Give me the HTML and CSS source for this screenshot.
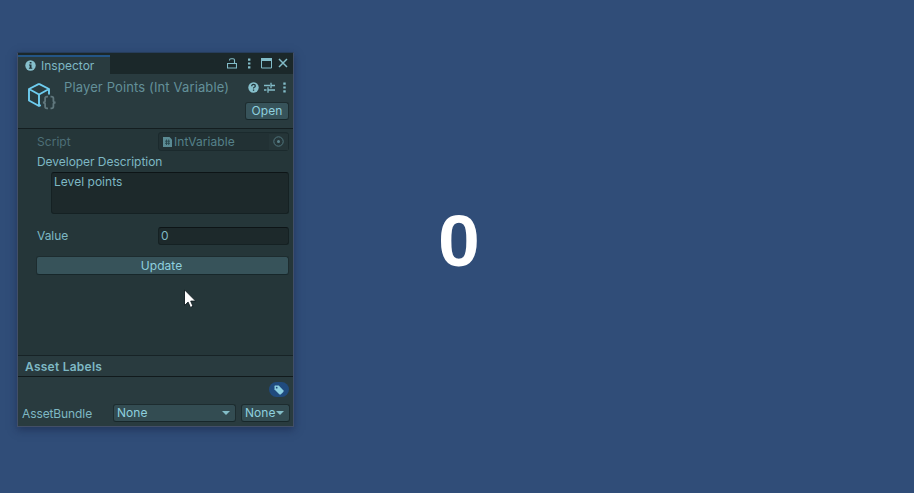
FILE: index.html
```html
<!DOCTYPE html>
<html lang="en">
<head>
<meta charset="utf-8">
<title>Inspector</title>
<link rel="stylesheet" href="styles.css">
</head>
<body>
<main class="game">
  <section class="inspector">
    <div class="tabbar">
      <div class="tab">
        <svg class="info" width="11" height="11" viewBox="0 0 11 11"><circle cx="5.5" cy="5.5" r="5.2" fill="#86c0cc"/><path d="M4.7 2h1.8v1.5H4.7zM4 4.5h2.5v3.2h.8v1H3.900v-1h.8V5.500H4z" fill="#20343a"/></svg>
        <span>Inspector</span>
      </div>
      <div class="window-tools">
        <svg width="10" height="11" viewBox="0 0 10 11" fill="none" stroke="#82bcc8"><path d="M.5 5.500h9v4.500H.5zM2.500 2.500V2Q2.500 .7 4 .7h2q1.500 0 1.500 1.400V5.500" stroke-width="1.100"/></svg>
        <svg width="3" height="11" viewBox="0 0 3 11" fill="#82bcc8"><path d="M0 .5h2.400v2.200H0zM0 4.400h2.400v2.200H0zM0 8.300h2.400v2.200H0z"/></svg>
        <svg width="11" height="11" viewBox="0 0 11 11"><path d="M.5.500h10v9.500H.5z" fill="none" stroke="#82bcc8"/><path d="M0 0h11v3H0z" fill="#82bcc8"/></svg>
        <svg width="10" height="10" viewBox="0 0 10 10"><path d="M1 1l8 8M9 1L1 9" stroke="#82bcc8" stroke-width="1.500"/></svg>
      </div>
    </div>
    <header class="asset-header">
      <svg class="cube" width="30" height="30" viewBox="0 0 30 30" fill="none"><path d="M12 1.900L22 7v5.500M12 1.900L2 7v11.500l10 5.500 1.800-.8M2 7l10 5.500L22 7M12 12.500V24" stroke="#6ecdf0" stroke-width="1.900" stroke-linejoin="round"/><path d="M21 14.700h-1q-1.900 0-1.900 1.800v2.200q0 1.800-2.200 1.800 2.200 0 2.200 1.800V24.500q0 1.900 1.900 1.900h1M23.500 14.700h1q1.900 0 1.900 1.800v2.200q0 1.800 2.200 1.800-2.200 0-2.200 1.800V24.500q0 1.900-1.900 1.900h-1" stroke="#60777d" stroke-width="1.800"/></svg>
      <div class="asset-info">
        <div class="title-row">
          <h1>Player Points (Int Variable)</h1>
          <div class="header-tools">
            <svg width="11" height="11" viewBox="0 0 11 11"><circle cx="5.500" cy="5.500" r="5.200" fill="#86c0cc"/><path d="M3.700 4.200q0-1.800 1.800-1.800t1.800 1.500q0 .9-1.100 1.400-.7.300-.7 1.200" fill="none" stroke="#20343a" stroke-width="1.200"/><path d="M4.900 7.500h1.300v1.300H4.900z" fill="#20343a"/></svg>
            <svg width="11" height="11" viewBox="0 0 11 11" stroke="#82bcc8" stroke-width="1.300"><path d="M0 3.500h6M7.500 3.500H11M7 .8v5.400M0 8h2.500M4.500 8H11M4 5.300v5.400"/></svg>
            <svg width="3" height="11" viewBox="0 0 3 11" fill="#82bcc8"><path d="M.3.500h2.400v2.200H.3zM.3 4.400h2.400v2.200H.3zM.3 8.300h2.400v2.200H.3z"/></svg>
          </div>
        </div>
        <button class="button open">Open</button>
      </div>
    </header>
    <div class="properties">
      <div class="row script-row">
        <label>Script</label>
        <div class="field object-field">
          <svg width="9" height="10" viewBox="0 0 9 10"><path d="M0 0h6.500L9 2.500V10H0z" fill="#5b8b94"/><path d="M3.500 2.500v5.500M5.700 2.500v5.500M2 4.200h5M2 6.300h5" stroke="#29464c" stroke-width=".9"/></svg>
          <span>IntVariable</span>
          <div class="picker"><svg width="11" height="11" viewBox="0 0 11 11"><circle cx="5.500" cy="5.500" r="4.700" fill="none" stroke="#51767e"/><circle cx="5.500" cy="5.500" r="1.500" fill="#5b838b"/></svg></div>
        </div>
      </div>
      <div class="description-label">Developer Description</div>
      <div class="field description">Level points</div>
      <div class="row value-row">
        <label>Value</label>
        <div class="field value">0</div>
      </div>
      <button class="button update">Update</button>
    </div>
    <div class="labels-heading">Asset Labels</div>
    <footer class="asset-footer">
      <div class="tag"><svg width="10" height="10" viewBox="0 0 10 10"><path d="M1 .5h3.700L9.500 5.500v1.200L6.700 9.500H5.500L.5 4.500V1z" fill="#8cd0e2"/><circle cx="2.700" cy="2.700" r=".9" fill="#204b7e"/></svg></div>
      <div class="bundle-row">
        <label>AssetBundle</label>
        <div class="button dropdown name"><span>None</span><svg width="8" height="4" viewBox="0 0 8 4"><path d="M0 0h8L4 4z" fill="#83bdc8"/></svg></div>
        <div class="button dropdown variant"><span>None</span><svg width="8" height="4" viewBox="0 0 8 4"><path d="M0 0h8L4 4z" fill="#83bdc8"/></svg></div>
      </div>
    </footer>
  </section>
  <div class="score">0</div>
  <svg class="cursor" width="13" height="20" viewBox="0 0 13 20"><path d="M.5.800v15.700l3.600-3.400 2.300 5.300 2.600-1.100-2.300-5.200h5z" fill="#fff" stroke="#101c20" stroke-width=".9"/></svg>
</main>
</body>
</html>
```
FILE: styles.css
```css
* { box-sizing: border-box; }
body { margin: 0; background: #304d78; font-family: Inter, sans-serif; font-size: 12px; line-height: 16px; color: #7eb8c4; }
svg { display: block; flex: none; }
.game { position: relative; display: flex; width: 914px; height: 493px; overflow: hidden; padding: 52px 0 0 17px; }
.inspector { display: flex; flex-direction: column; flex: none; width: 277px; height: 375px; border: 1px solid #424f68; border-top-color: #263d5b; background: #27383b; box-shadow: 0 3px 8px rgba(20, 32, 65, .5); letter-spacing: -.04px; }
.tabbar { display: flex; height: 21px; flex: none; background: #1b282a; }
.tab { display: flex; align-items: center; gap: 5px; width: 92px; height: 19px; margin-top: 2px; padding: 1px 0 0 7px; border-top: 2px solid #235586; background: #293b3f; letter-spacing: 0; }
.tab span { margin-top: -1px; }
.tab .info { margin-top: -1px; }
.window-tools { display: flex; align-items: center; margin-left: auto; padding: 0 5px 1px 0; }
.window-tools svg:nth-child(2) { margin-left: 11px; }
.window-tools svg:nth-child(3) { margin-left: 10px; }
.window-tools svg:nth-child(4) { margin-left: 6px; }
.asset-header { display: flex; height: 55px; flex: none; padding: 6px 5px 0 9px; border-bottom: 1px solid #141e20; background: #293b3f; }
.cube { margin-top: 2px; }
.asset-info { display: flex; flex: 1; flex-direction: column; padding-left: 7px; }
.title-row { display: flex; align-items: center; justify-content: space-between; height: 14px; }
h1 { margin: 0; width: 166px; font-size: 13px; line-height: 16px; font-weight: 400; color: #639099; letter-spacing: .13px; white-space: nowrap; }
.header-tools { display: flex; align-items: center; gap: 5px; margin-right: 2px; }
.header-tools svg:last-child { margin-left: 3px; }
.button { border: 1px solid #1d2c2f; border-bottom-color: #17272a; border-radius: 3px; background: #37535a; color: #8ed0df; font: 12px/16px Inter, sans-serif; letter-spacing: .05px; padding: 0; text-align: center; }
.open { width: 44px; height: 18px; margin: 8px -1px 0 0; align-self: flex-end; }
.properties { flex: none; height: 227px; padding: 3px 4px 0 19px; border-bottom: 1px solid #172326; background: #253639; }
.row { display: flex; align-items: center; height: 19px; }
.row label { width: 121px; }
.field { border: 1px solid #152123; border-top-color: #0d1416; border-radius: 3px; background: #1d292b; }
.script-row { color: #4d6f77; letter-spacing: .05px; }
.object-field { display: flex; align-items: center; width: 131px; height: 19px; border-color: #1b2a2d; background: #223134; padding-left: 4px; color: #55818a; }
.object-field span { margin-left: 2px; }
.picker { display: flex; align-items: center; justify-content: center; width: 19px; height: 16px; margin-left: auto; background: #253538; }
.description-label { height: 18px; margin-top: 3px; white-space: nowrap; }
.description { width: 238px; height: 42px; margin: 0 0 0 14px; padding: 1px 2px; letter-spacing: .03px; }
.value-row { margin-top: 12px; }
.value { width: 131px; height: 18px; padding: 0 2px; }
.update { display: block; width: 253px; height: 19px; margin: 11px 0 0 -1px; padding-right: 2px; }
.labels-heading { height: 21px; flex: none; padding: 3px 7px; border-bottom: 1px solid #111a1c; background: #293b3f; font-weight: 600; letter-spacing: .25px; }
.asset-footer { display: flex; flex: 1; flex-direction: column; padding: 5px 3px 0 4px; background: #293b3f; }
.tag { display: flex; align-items: center; justify-content: center; width: 20px; height: 15px; margin-right: 1px; align-self: flex-end; border-radius: 8px; background: #204b7e; }
.bundle-row { display: flex; align-items: center; height: 18px; margin-top: 7px; letter-spacing: -.1px; }
.bundle-row label { width: 91px; padding-top: 1px; }
.dropdown { display: flex; align-items: center; justify-content: space-between; height: 18px; padding: 0 5px 0 3px; background: #334c52; }
.name { width: 123px; }
.variant { width: 49px; margin-left: 5px; }
.score { width: 44px; margin: 151px 0 0 144px; color: #fff; font: bold 73px/76px "Liberation Sans", Arial, sans-serif; transform: scaleX(1.03); transform-origin: left; }
.cursor { position: absolute; left: 184px; top: 289px; }
```
